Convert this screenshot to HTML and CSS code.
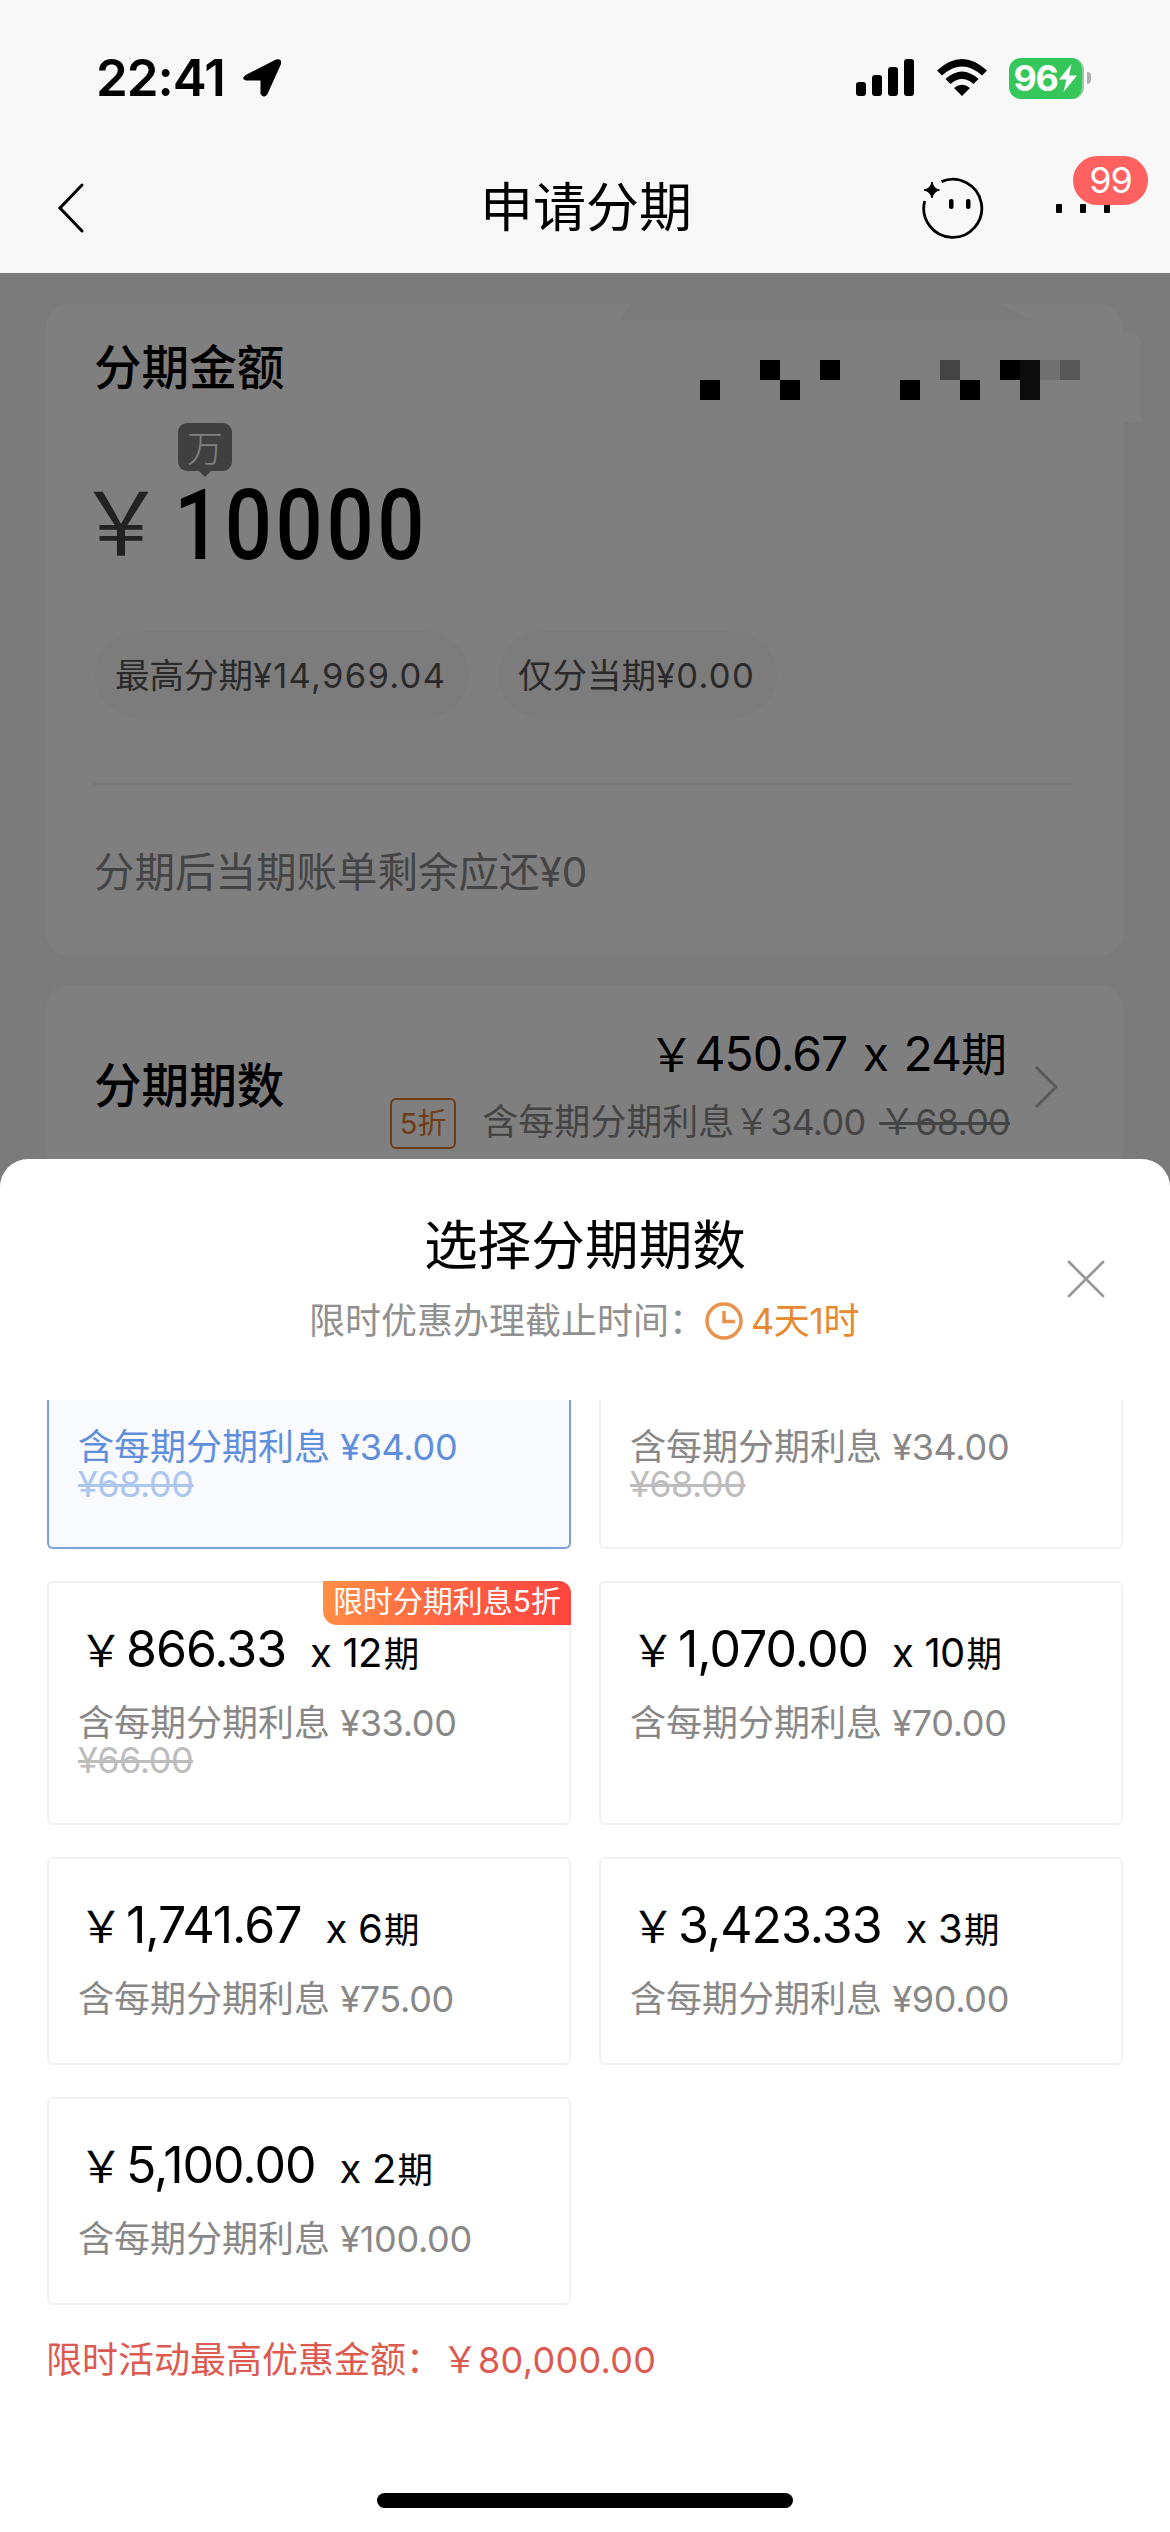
FILE: index.html
```html
<!DOCTYPE html>
<html lang="zh-CN">
<head>
<meta charset="utf-8">
<title>申请分期</title>
<link rel="stylesheet" href="styles.css">
</head>
<body>
<div class="screen">
  <header class="header">
    <div class="status">
      <span class="time">22:41</span>
      <svg class="location" width="40" height="40" viewBox="0 0 40 40"><path d="M4.500 16.500 34 1.500Q40 0 39 6L25.500 36Q22 41 18.500 36V22.500H4Q-2 21 4.500 16.500Z"/></svg>
      <svg class="signal" width="58" height="38" viewBox="0 0 58 38"><rect x="0" y="23" width="10" height="14" rx="3"/><rect x="16" y="16" width="10" height="21" rx="3"/><rect x="32" y="8" width="10" height="29" rx="3"/><rect x="48" y="0" width="10" height="37" rx="3"/></svg>
      <svg class="wifi" width="52" height="38" viewBox="0 0 52 38"><path d="M1 11.500Q26-11.500 51 11.500L46 16.500Q26-1.500 6 16.500ZM9.500 20Q26 5 42.500 20L37.500 25Q26 15 14.500 25ZM18 29Q26 22.500 34 29L26 37Z"/></svg>
      <div class="battery"><span>96</span><svg width="18" height="28" viewBox="0 0 18 28"><path d="M12.500 0 0 15.500H7.500L4.500 28 18 11.500H10Z" fill="#fff"/></svg></div>
      <i class="nub"></i>
    </div>
    <div class="nav">
      <svg class="back" width="28" height="52" viewBox="0 0 28 52"><path d="M25 3 3 26 25 49" fill="none" stroke="#000" stroke-width="3" stroke-linecap="round"/></svg>
      <h1 class="title">申请分期</h1>
      <svg class="face" width="62" height="62" viewBox="0 0 62 62"><path d="M19.500 4.600A29 29 0 1 1 2.700 24" fill="none" stroke="#000" stroke-width="2.800"/><path d="M10 5Q11.500 12 17.500 13 11.500 14.500 10 21 8.500 14.500 2 13 8.500 12 10 5Z" stroke="#000"/><rect x="27" y="22" width="4.500" height="10" rx="2"/><rect x="44" y="22" width="4.500" height="10" rx="2"/></svg>
      <div class="more"><i></i><i></i><i></i><span class="count">99</span></div>
    </div>
  </header>

  <main class="content">
    <section class="card amount">
      <h2>分期金额</h2>
      <div class="entry"><span class="yen">￥</span><div class="figure"><span class="digits">10000</span><span class="unit">万</span></div></div>
      <div class="pills"><span class="pill">最高分期<em>¥14,969.04</em></span><span class="pill second">仅分当期<em>¥0.00</em></span></div>
      <p class="remain">分期后当期账单剩余应还<span>¥0</span></p>
      <svg class="mask" width="520" height="120" viewBox="0 0 520 120"><path d="M9 0H380Q395 10 415 16H0Z" fill="#f7f7f7"/><path d="M495 28H510Q520 30 520 42V118H500Z" fill="#fff"/><path d="M139 56h20v20h-20zM199 56h20v20h-20zM79 76h20v20H79zM159 76h20v20h-20zM279 76h20v20h-20zM339 76h20v20h-20zM379 56h20v20h-20z"/><path d="M319 56h20v20h-20z" fill="#888"/><path d="M399 56h20v40h-20z" fill="#181818"/><path d="M419 56h20v20h-20z" fill="#e2e2e2"/><path d="M439 56h20v20h-20z" fill="#b0b0b0"/></svg>
    </section>
    <section class="card terms">
      <h2>分期期数</h2>
      <div class="choice">
        <div class="plan">￥<span>450.67 x 24</span>期</div>
        <div class="interest"><b>5折</b><span>含每期分期利息￥<em>34.00</em></span><s>￥<em>68.00</em></s></div>
      </div>
      <svg width="24" height="44" viewBox="0 0 24 44"><path d="M2 2 22 22 2 42" fill="none" stroke="#b4b4b4" stroke-width="3"/></svg>
    </section>
    <div class="shade"></div>
  </main>

  <section class="sheet">
    <div class="sheet-head">
      <h2>选择分期期数</h2>
      <div class="deadline">限时优惠办理截止时间：<svg width="38" height="38" viewBox="0 0 38 38"><circle cx="19" cy="19" r="17" fill="none" stroke="#e8924b" stroke-width="3.500"/><path d="M19 9V19.500H30" fill="none" stroke="#e8924b" stroke-width="3.500"/></svg><span>4天1时</span></div>
      <svg class="close" width="38" height="38" viewBox="0 0 38 38"><path d="M2 2 36 36M36 2 2 36" stroke="#999" stroke-width="2.800" stroke-linecap="round"/></svg>
    </div>
    <div class="options">
      <div class="option clipped selected"><p>含每期分期利息 <span>¥34.00</span></p><s>¥68.00</s></div>
      <div class="option clipped"><p>含每期分期利息 <span>¥34.00</span></p><s>¥68.00</s></div>
      <div class="option"><div class="tag">限时分期利息5折</div><div class="price"><i>￥</i><strong>866.33</strong><span>x 12</span><small>期</small></div><p>含每期分期利息 <span>¥33.00</span></p><s>¥66.00</s></div>
      <div class="option"><div class="price"><i>￥</i><strong>1,070.00</strong><span>x 10</span><small>期</small></div><p>含每期分期利息 <span>¥70.00</span></p></div>
      <div class="option"><div class="price"><i>￥</i><strong>1,741.67</strong><span>x 6</span><small>期</small></div><p>含每期分期利息 <span>¥75.00</span></p></div>
      <div class="option"><div class="price"><i>￥</i><strong>3,423.33</strong><span>x 3</span><small>期</small></div><p>含每期分期利息 <span>¥90.00</span></p></div>
      <div class="option"><div class="price"><i>￥</i><strong>5,100.00</strong><span>x 2</span><small>期</small></div><p>含每期分期利息 <span>¥100.00</span></p></div>
    </div>
    <p class="limit">限时活动最高优惠金额：￥<span>80,000.00</span></p>
    <div class="home"></div>
  </section>
</div>
</body>
</html>
```
FILE: styles.css
```css
* { box-sizing: border-box; margin: 0; padding: 0; }
body { font-family: Inter, "Noto Sans CJK SC", sans-serif; color: #000; background: #fff; }
svg { display: block; flex: none; }
em, i { font-style: normal; }
.screen { position: relative; width: 1170px; height: 2532px; overflow: hidden; display: flex; flex-direction: column; }

.header { height: 273px; background: #f8f8f8; padding-top: 50px; }
.status { height: 56px; display: flex; align-items: center; padding-left: 96px; }
.time { font-size: 51px; font-weight: 600; width: 146px; line-height: 56px; letter-spacing: -1px; }
.signal { margin-left: 574px; }
.wifi { margin-left: 22px; }
.battery { margin-left: 21px; width: 75px; height: 41px; border-radius: 12px; background: #35c759; display: flex; align-items: center; justify-content: center; color: #fff; border-right: 2px solid #9ac7a4; }
.battery span { font-size: 36px; font-weight: 700; line-height: 41px; letter-spacing: -1.5px; }
.battery svg { margin-left: 2px; }
.nub { width: 4px; height: 12px; margin-left: 3px; border-radius: 0 4px 4px 0; background: #b0b0b0; }
.nav { height: 167px; padding: 37px 0 0 57px; display: grid; grid-template-columns: 423px 442px 134px 54px; grid-template-rows: 130px; align-items: center; }
.title { font-size: 53px; font-weight: 400; line-height: 60px; }
.more { position: relative; display: flex; justify-content: space-between; width: 54px; }
.more i { width: 6px; height: 9px; background: #000; border-radius: 1px; }
.count { position: absolute; left: 17px; top: -48px; width: 75px; height: 49px; border-radius: 25px; background: #ff6060; color: #fff; font-size: 36px; line-height: 49px; text-align: center; letter-spacing: -1px; }

.content { position: relative; flex: 1; background: #f7f7f7; padding: 31px 47px 0 46px; }
.shade { position: absolute; inset: 0; background: rgba(0, 0, 0, .5); }
.card { background: #fff; border-radius: 24px; }
.card h2 { font-size: 47.600px; font-weight: 500; line-height: 60px; margin-left: -1px; }
.amount { position: relative; height: 652px; padding: 34px 49px 0; }
.mask { position: absolute; left: 575px; top: 0; }
.entry { display: flex; height: 112px; margin-top: 67px; }
.yen { font-size: 88px; font-weight: 400; line-height: 116px; color: #444; width: 85px; text-indent: -18px; }
.figure { position: relative; font-family: Roboto, sans-serif; font-weight: 500; font-size: 99px; line-height: 121px; }
.digits { display: inline-block; margin-left: -6px; transform: scaleX(.84); transform-origin: left; letter-spacing: 4.200px; }
.unit { position: absolute; left: -2px; top: -42px; width: 54px; height: 48px; border-radius: 9px; background: #808080; color: #fff; font: 300 36px/46px "Noto Sans CJK SC", sans-serif; text-align: center; }
.unit::after { content: ""; position: absolute; left: 21px; top: 48px; border: 6px solid transparent; border-top-color: #808080; border-bottom: 0; }
.pills { display: flex; gap: 29px; margin-top: 54px; }
.pill { width: 374px; height: 87px; border-radius: 44px; background: #f9f9f9; color: #555; font-size: 34.500px; line-height: 89px; padding-left: 20px; white-space: nowrap; }
.pill em { letter-spacing: 1.300px; }
.pill.second { width: 279px; }
.remain { margin: 65px 0 0 -2px; width: 980px; border-top: 2px solid #f0f0f0; font-size: 40.500px; line-height: 56px; padding: 60px 0 0 1px; color: #888; }
.terms { display: flex; align-items: flex-start; margin-top: 29px; height: 240px; padding: 0 65px 0 49px; border-radius: 24px; }
.terms h2 { margin-top: 71px; }
.terms > svg { margin: 80px 0 0 27px; }
.choice { margin-left: auto; display: flex; flex-direction: column; align-items: flex-end; }
.plan { font-size: 46px; line-height: 60px; margin-top: 39px; white-space: nowrap; }
.plan span { font-size: 48px; letter-spacing: -1px; word-spacing: 3px; }
.interest { display: flex; align-items: center; font-size: 36px; line-height: 40px; color: #888; margin: 10px -3px 0 0; white-space: nowrap; }
.interest em { letter-spacing: -.8px; }
.interest b { width: 66px; height: 51px; border: 2px solid #e07830; border-radius: 6px; color: #e07830; font-size: 29px; font-weight: 400; line-height: 47px; text-align: center; margin-right: 26px; margin-top: 4px; }
.interest s { margin-left: 14px; }

.sheet { position: absolute; left: 0; right: 0; top: 1159px; bottom: 0; background: #fff; border-radius: 28px 28px 0 0; display: flex; flex-direction: column; }
.sheet-head { position: relative; height: 241px; padding-top: 55px; text-align: center; flex: none; }
.sheet-head h2 { font-size: 53.700px; font-weight: 400; line-height: 64px; }
.deadline { display: flex; align-items: center; padding-left: 309px; margin-top: 21px; font-size: 36px; line-height: 44px; color: #909090; }
.deadline span { margin-left: 8px; color: #e8882f; letter-spacing: -.5px; }
.close { position: absolute; left: 1067px; top: 101px; }
.options { display: grid; grid-template-columns: 524px 524px; grid-template-rows: 149px 244px 208px 208px; gap: 32px 28px; padding-left: 47px; }
.option { position: relative; border: 2px solid #f1f1f1; border-radius: 6px; padding: 37px 0 0 29px; background: #fff; color: #888; font-size: 36px; line-height: 37px; white-space: nowrap; }
.option.clipped { border-top: 0; border-radius: 0 0 6px 6px; padding-top: 29px; }
.option.selected { border-color: #7ba0d8; background: #f8fafe; color: #5f8fdc; }
.option s { color: #bdbdbd; letter-spacing: -.5px; display: block; width: max-content; }
.option.selected s { color: #adc6ef; }
.option p span { letter-spacing: -.3px; }
.price { color: #000; font-size: 48px; line-height: 58px; height: 58px; margin-bottom: 27px; display: flex; align-items: baseline; }
.price i { font-size: 44px; width: 48px; padding-left: 1px; }
.price strong { font-size: 50px; font-weight: 400; letter-spacing: -1px; }
.price span { font-size: 40px; margin-left: 24px; letter-spacing: -.8px; word-spacing: 1px; }
.price small { font-size: 35.500px; margin-left: 2px; }
.tag { position: absolute; right: -2px; top: -2px; width: 248px; height: 44px; border-radius: 0 12px 0 14px; background: linear-gradient(100deg, #ff9045, #ff5a42 60%, #ff4440); color: #fff; font-size: 30px; line-height: 40px; text-align: center; }
.limit { margin: 33px 0 0 46px; font-size: 36px; line-height: 44px; color: #dc5a50; }
.limit span { letter-spacing: .3px; }
.home { width: 416px; height: 15px; border-radius: 8px; background: #000; margin: auto auto 24px 377px; }
```
